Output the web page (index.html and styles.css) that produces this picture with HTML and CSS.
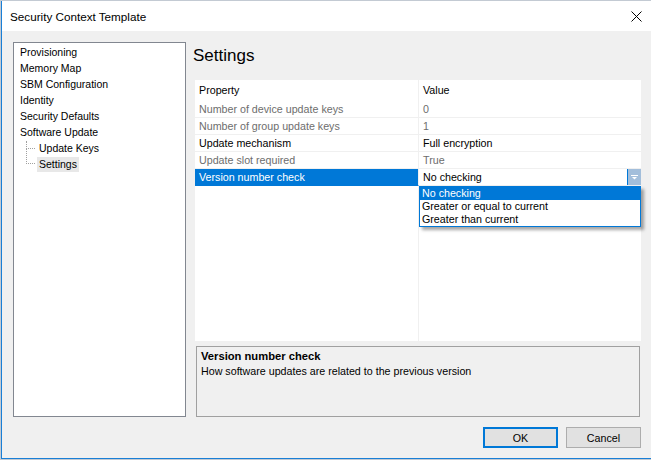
FILE: index.html
```html
<!DOCTYPE html>
<html lang="en">
<head>
    <meta charset="UTF-8">
    <title>Security Context Template</title>
    <link rel="stylesheet" href="styles.css">
</head>
<body>
    <div class="window">
        <div class="titlebar">
            <span class="title">Security Context Template</span>
            <svg class="close" width="11" height="11" viewBox="0 0 11 11">
                <path d="M0.5 0.5L10.5 10.5M10.5 0.5L0.5 10.5" stroke="#000" stroke-width="1" fill="none"/>
            </svg>
        </div>
        <div class="content">
            <div class="main">
                <ul class="tree">
                    <li>Provisioning</li>
                    <li>Memory Map</li>
                    <li>SBM Configuration</li>
                    <li>Identity</li>
                    <li>Security Defaults</li>
                    <li>Software Update
                        <ul class="children">
                            <li class="first"><span>Update Keys</span></li>
                            <li><span class="current">Settings</span></li>
                        </ul>
                    </li>
                </ul>
                <div class="panel">
                    <h1>Settings</h1>
                    <div class="grid">
                        <div class="row head">
                            <div class="cell name">Property</div>
                            <div class="cell value">Value</div>
                        </div>
                        <div class="row disabled">
                            <div class="cell name">Number of device update keys</div>
                            <div class="cell value">0</div>
                        </div>
                        <div class="row disabled">
                            <div class="cell name">Number of group update keys</div>
                            <div class="cell value">1</div>
                        </div>
                        <div class="row">
                            <div class="cell name">Update mechanism</div>
                            <div class="cell value">Full encryption</div>
                        </div>
                        <div class="row disabled">
                            <div class="cell name">Update slot required</div>
                            <div class="cell value">True</div>
                        </div>
                        <div class="row selected">
                            <div class="cell name">Version number check</div>
                            <div class="cell value combo">
                                <span class="combo-text">No checking</span>
                                <span class="combo-btn">
                                    <svg width="7" height="5" viewBox="0 0 7 5">
                                        <rect x="0" y="0" width="7" height="1" fill="#fff"/>
                                        <path d="M1 2H6L3.5 4.5Z" fill="#fff"/>
                                    </svg>
                                </span>
                            </div>
                            <ul class="dropdown">
                                <li class="hot">No checking</li>
                                <li>Greater or equal to current</li>
                                <li>Greater than current</li>
                            </ul>
                        </div>
                        <div class="row filler">
                            <div class="cell name"></div>
                            <div class="cell value"></div>
                        </div>
                    </div>
                    <div class="desc">
                        <div class="desc-title">Version number check</div>
                        <div>How software updates are related to the previous version</div>
                    </div>
                </div>
            </div>
            <div class="buttons">
                <button class="ok">OK</button>
                <button>Cancel</button>
            </div>
        </div>
    </div>
</body>
</html>
```

FILE: styles.css
```css
body{
    margin: 0;
    background: #c3cad3;
    font-family: "Liberation Sans", Arial, sans-serif;
    font-size: 10.7px;
    color: #000;
    overflow: hidden;
}
ul{
    margin: 0;
    padding: 0;
    list-style: none;
}
.window{
    margin: 1px 0 0 1px;
    width: 650px;
    height: 458px;
    box-sizing: border-box;
    border-left: 1px solid #1a7fd6;
    border-bottom: 1px solid #1a7fd6;
    display: flex;
    flex-direction: column;
}
.titlebar{
    height: 30px;
    flex-shrink: 0;
    background: #fff;
    display: flex;
    align-items: center;
    justify-content: space-between;
    padding: 0 9px 0 8px;
}
.title{
    font-size: 11.7px;
    margin-top: 1px;
}
.close{
    margin-top: 1px;
}
.content{
    flex: 1;
    background: #f0f0f0;
    padding: 11px 10px 0 11px;
    display: flex;
    flex-direction: column;
}
.main{
    display: flex;
    height: 375px;
}
.tree{
    width: 173px;
    box-sizing: border-box;
    border: 1px solid #828790;
    background: #fff;
    padding: 1px 0 0 6px;
    font-size: 10.5px;
    line-height: 16px;
}
.tree .children{
    margin-left: 17px;
}
.tree .children li{
    position: relative;
}
.tree .children li::before{
    content: "";
    position: absolute;
    left: -11px;
    top: -8px;
    width: 8px;
    height: 15px;
    border-left: 1px dotted #a0a0a0;
    border-bottom: 1px dotted #a0a0a0;
}
.tree .children li.first::before{
    top: 1px;
    height: 7px;
}
.tree .children span{
    padding: 0 2px;
    display: inline-block;
    line-height: 15px;
    margin-top: 1px;
}
.tree .current{
    background: #e8e8e8;
}
.panel{
    flex: 1;
    margin-left: 9px;
    display: flex;
    flex-direction: column;
}
.panel h1{
    margin: 0 0 0 -2px;
    height: 38px;
    font-size: 17px;
    font-weight: normal;
    line-height: 27px;
}
.grid{
    height: 261px;
    flex-shrink: 0;
    background: #fff;
    display: flex;
    flex-direction: column;
}
.row{
    display: flex;
    height: 17px;
    flex-shrink: 0;
    position: relative;
}
.cell{
    box-sizing: border-box;
    padding-left: 4px;
    line-height: 16px;
    border-bottom: 1px solid #f0f0f0;
    white-space: nowrap;
}
.cell.name{
    width: 224px;
    border-right: 1px solid #f0f0f0;
}
.cell.value{
    flex: 1;
}
.row.head{
    height: 21px;
}
.row.head .cell{
    line-height: 21px;
    border-bottom: none;
}
.row.disabled .cell{
    color: #6d6d6d;
}
.row.selected .name{
    background: #0078d7;
    color: #fff;
    border-bottom-color: #0078d7;
}
.combo{
    display: flex;
    padding-right: 0;
}
.combo-text{
    flex: 1;
}
.combo-btn{
    width: 13px;
    height: 16px;
    border-left: 1px solid #0078d7;
    background: #a2bedb;
    display: flex;
    align-items: center;
    justify-content: center;
}
.dropdown{
    position: absolute;
    top: 17px;
    left: 224px;
    width: 222px;
    box-sizing: border-box;
    border: 1px solid #0078d7;
    background: #fff;
    box-shadow: 3px 3px 3px rgba(0, 0, 0, 0.35);
    line-height: 13px;
    z-index: 10;
}
.dropdown li{
    padding-left: 2px;
}
.dropdown li.hot{
    background: #0078d7;
    color: #fff;
}
.row.filler{
    flex: 1;
}
.row.filler .cell{
    border-bottom: none;
}
.desc{
    flex: 1;
    margin: 5px 1px 0;
    border: 1px solid #a0a0a0;
    padding: 2px 4px 0;
    line-height: 15px;
}
.desc-title{
    font-weight: bold;
    font-size: 11.2px;
}
.buttons{
    display: flex;
    justify-content: flex-end;
    gap: 8px;
    margin-top: 10px;
}
.buttons button{
    width: 75px;
    height: 21px;
    padding: 0;
    font: inherit;
    color: #000;
    background: #e1e1e1;
    border: 1px solid #adadad;
}
.buttons .ok{
    border: 2px solid #0078d7;
}
```
